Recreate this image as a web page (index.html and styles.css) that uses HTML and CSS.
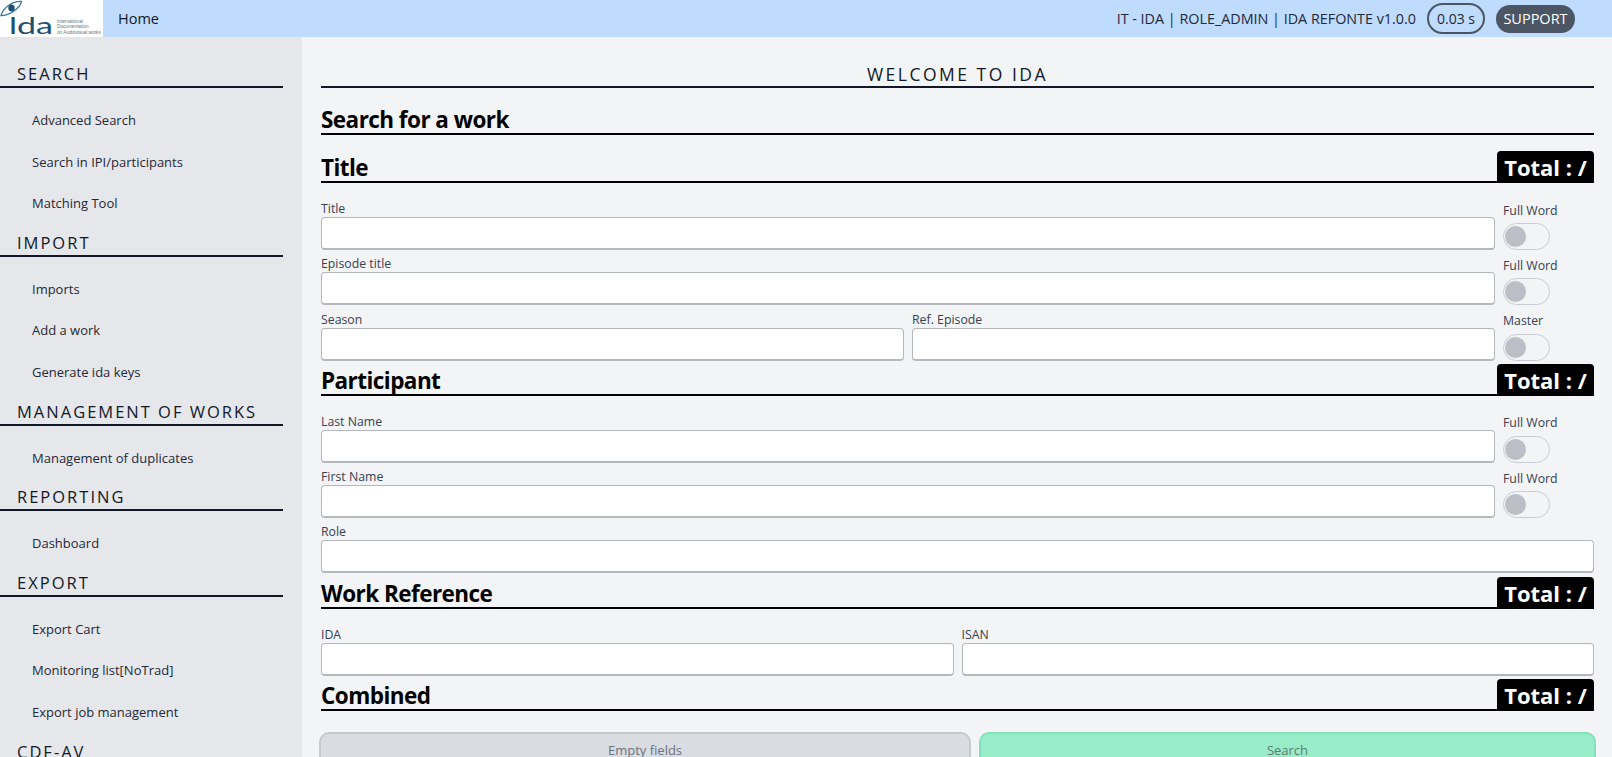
FILE: index.html
```html
<!DOCTYPE html>
<html lang="en">
<head>
<meta charset="utf-8">
<title>IDA</title>
<link rel="stylesheet" href="styles.css">
</head>
<body>
<header class="topbar">
  <a class="logo" href="#">
    <svg class="logo-svg" viewBox="0 0 103 37" width="103" height="37" aria-label="IDA logo">
      <path d="M1 15.500 C3 8 12 1 21.500 1.500 C20 8 10 15.500 1 15.500 Z" fill="none" stroke="#3a7aa0" stroke-width="1.300"/>
      <ellipse cx="11.500" cy="8" rx="3.200" ry="3.600" fill="#1d4f70"/>
      <text x="9" y="34" class="logo-ida" textLength="44" lengthAdjust="spacingAndGlyphs">lda</text>
      <text x="57" y="22.500" class="logo-small">International</text>
      <text x="57" y="28" class="logo-small">Documentation</text>
      <text x="57" y="34" class="logo-small">on Audiovisual works</text>
    </svg>
  </a>
  <a class="home" href="#">Home</a>
  <div class="top-right">
    <span class="env">IT - IDA | ROLE_ADMIN | IDA REFONTE v1.0.0</span>
    <span class="timer">0.03 s</span>
    <button class="support" type="button">SUPPORT</button>
  </div>
</header>
<div class="layout">
  <nav class="sidebar">
    <section class="nav-group">
      <h3 class="nav-title">SEARCH</h3>
      <ul class="nav-list">
        <li>Advanced Search</li>
        <li>Search in IPI/participants</li>
        <li>Matching Tool</li>
      </ul>
    </section>
    <section class="nav-group">
      <h3 class="nav-title">IMPORT</h3>
      <ul class="nav-list">
        <li>Imports</li>
        <li>Add a work</li>
        <li>Generate ida keys</li>
      </ul>
    </section>
    <section class="nav-group">
      <h3 class="nav-title">MANAGEMENT OF WORKS</h3>
      <ul class="nav-list">
        <li>Management of duplicates</li>
      </ul>
    </section>
    <section class="nav-group">
      <h3 class="nav-title">REPORTING</h3>
      <ul class="nav-list">
        <li>Dashboard</li>
      </ul>
    </section>
    <section class="nav-group">
      <h3 class="nav-title">EXPORT</h3>
      <ul class="nav-list">
        <li>Export Cart</li>
        <li>Monitoring list[NoTrad]</li>
        <li>Export job management</li>
      </ul>
    </section>
    <section class="nav-group">
      <h3 class="nav-title">CDF-AV</h3>
    </section>
  </nav>
  <main class="content">
    <h1 class="welcome">WELCOME TO IDA</h1>
    <h2 class="page-title">Search for a work</h2>

    <div class="section-head"><h2 class="section-title">Title</h2><span class="total">Total : /</span></div>
    <div class="row with-toggle">
      <div class="field"><label class="lbl">Title</label><input class="inp" type="text"></div>
      <div class="toggle-field"><span class="lbl">Full Word</span><span class="toggle"><i class="knob"></i></span></div>
    </div>
    <div class="row with-toggle">
      <div class="field"><label class="lbl">Episode title</label><input class="inp" type="text"></div>
      <div class="toggle-field"><span class="lbl">Full Word</span><span class="toggle"><i class="knob"></i></span></div>
    </div>
    <div class="row with-toggle">
      <div class="pair">
        <div class="field"><label class="lbl">Season</label><input class="inp" type="text"></div>
        <div class="field"><label class="lbl">Ref. Episode</label><input class="inp" type="text"></div>
      </div>
      <div class="toggle-field"><span class="lbl">Master</span><span class="toggle"><i class="knob"></i></span></div>
    </div>

    <div class="section-head"><h2 class="section-title">Participant</h2><span class="total">Total : /</span></div>
    <div class="row with-toggle">
      <div class="field"><label class="lbl">Last Name</label><input class="inp" type="text"></div>
      <div class="toggle-field"><span class="lbl">Full Word</span><span class="toggle"><i class="knob"></i></span></div>
    </div>
    <div class="row with-toggle">
      <div class="field"><label class="lbl">First Name</label><input class="inp" type="text"></div>
      <div class="toggle-field"><span class="lbl">Full Word</span><span class="toggle"><i class="knob"></i></span></div>
    </div>
    <div class="row">
      <div class="field"><label class="lbl">Role</label><input class="inp" type="text"></div>
    </div>

    <div class="section-head"><h2 class="section-title">Work Reference</h2><span class="total">Total : /</span></div>
    <div class="row">
      <div class="pair">
        <div class="field"><label class="lbl">IDA</label><input class="inp" type="text"></div>
        <div class="field"><label class="lbl">ISAN</label><input class="inp" type="text"></div>
      </div>
    </div>

    <div class="section-head"><h2 class="section-title">Combined</h2><span class="total">Total : /</span></div>
    <div class="actions">
      <button class="btn btn-empty" type="button">Empty fields</button>
      <button class="btn btn-search" type="button">Search</button>
    </div>
  </main>
</div>
</body>
</html>
```
FILE: styles.css
```css
* { box-sizing: border-box; }
html, body { margin: 0; height: 100%; overflow: hidden; }
body {
  font-family: "Open Sans", "Noto Sans", sans-serif;
  color: #111827;
  background: #f3f4f6;
  display: flex;
  flex-direction: column;
}
.topbar {
  height: 37px;
  flex: none;
  display: flex;
  align-items: center;
  background: #bfdbfe;
}
.logo { display: block; width: 103px; height: 37px; background: #fff; flex: none; }
.logo-svg { display: block; }
.logo-ida { font-family: "Lato", sans-serif; font-size: 24px; fill: #1d4f70; }
.logo-small { font-family: "Liberation Sans", sans-serif; font-size: 4.700px; fill: #5d7585; }
.home { margin-left: 15px; font-size: 14.500px; color: #111827; text-decoration: none; }
.top-right { margin-left: auto; display: flex; align-items: center; padding-right: 37px; }
.env { font-size: 14.350px; color: #1f2937; margin-right: 11px; }
.timer {
  height: 31px; width: 58px;
  border: 2px solid #4b5563; border-radius: 16px;
  display: flex; align-items: center; justify-content: center;
  font-size: 14px; color: #1f2937; margin-right: 11px;
}
.support {
  height: 28px; width: 79px; border: 0; border-radius: 14px;
  background: #4b5563; color: #fff; font: inherit; font-size: 14.500px; padding: 0;
}
.layout { flex: 1; min-height: 0; display: flex; overflow: hidden; }
.sidebar { width: 302px; flex: none; background: #e5e7eb; padding: 23px 19px 0 0; overflow: hidden; }
.nav-group { margin-bottom: 5px; }
.nav-title {
  margin: 0; height: 28px; padding-left: 17px;
  font-size: 16.500px; line-height: 28px; font-weight: 500; letter-spacing: 2px;
  border-bottom: 2px solid #111827; white-space: nowrap;
}
.nav-list { list-style: none; margin: 11px 0 0; padding: 0; }
.nav-list li { height: 41.600px; line-height: 43px; padding-left: 32px; font-size: 13px; color: #1f2937; }
.content { flex: 1; min-width: 0; padding: 23px 18px 0 19px; overflow: hidden; }
.welcome {
  margin: 0; height: 28px; text-align: center;
  font-size: 17.500px; line-height: 28px; font-weight: 500; letter-spacing: 2.500px;
  border-bottom: 2px solid #111827;
}
.page-title {
  margin: 18px 0 0; height: 29px;
  font-size: 22.500px; line-height: 27px; font-weight: 700; color: #000; letter-spacing: -0.550px;
  border-bottom: 2px solid #000;
}
.section-head {
  display: flex; justify-content: space-between; align-items: flex-end;
  height: 32px; margin-top: 3px; border-bottom: 2px solid #000;
}
.page-title + .section-head { margin-top: 16px; }
.section-title { margin: 0; height: 30px; font-size: 22.500px; line-height: 34px; font-weight: 700; color: #000; letter-spacing: -0.550px; }
.total {
  width: 97px; height: 31px; margin-bottom: -1px;
  background: #000; color: #fff; border-radius: 4px 4px 0 0;
  font-size: 22px; line-height: 32px; font-weight: 700; text-align: center; white-space: nowrap;
}
.section-head + .row { margin-top: 12px; }
.row { display: grid; grid-template-columns: 1fr; height: 55.300px; }
.with-toggle { grid-template-columns: 1fr 91px; column-gap: 8px; }
.pair { display: grid; grid-template-columns: 1fr 1fr; column-gap: 8px; }
.field { min-width: 0; }
.lbl { display: block; height: 22px; font-size: 12.300px; line-height: 27.500px; color: #374151; }
.inp {
  display: block; width: 100%; height: 33px; padding: 0 8px;
  background: #fff; border: 1px solid #b4b7bd; border-bottom-width: 2px; border-radius: 4px; outline: 0;
}
.toggle-field .lbl { height: 20px; margin-top: 5.500px; line-height: 20px; }
.toggle {
  display: block; position: relative; width: 47px; height: 27px; margin-top: 2.500px;
  border: 1px solid #c8ccd2; border-radius: 14px; background: #f3f4f6;
}
.knob {
  position: absolute; left: 1px; top: 2px; width: 21px; height: 21px;
  border-radius: 50%; background: #bcc0c6;
}
.actions { display: grid; grid-template-columns: 652px 617px; column-gap: 8px; margin: 21px 0 0 -2px; }
.btn { height: 44px; border-radius: 10px; font: inherit; font-size: 13px; padding: 0 0 8px; color: #6b7280; border: 2px solid; }
.btn-empty { background: #d9dce0; border-color: #c6c9ce; }
.btn-search { background: #98ecc8; border-color: #7fe3ba; color: #5b7d70; }
```
